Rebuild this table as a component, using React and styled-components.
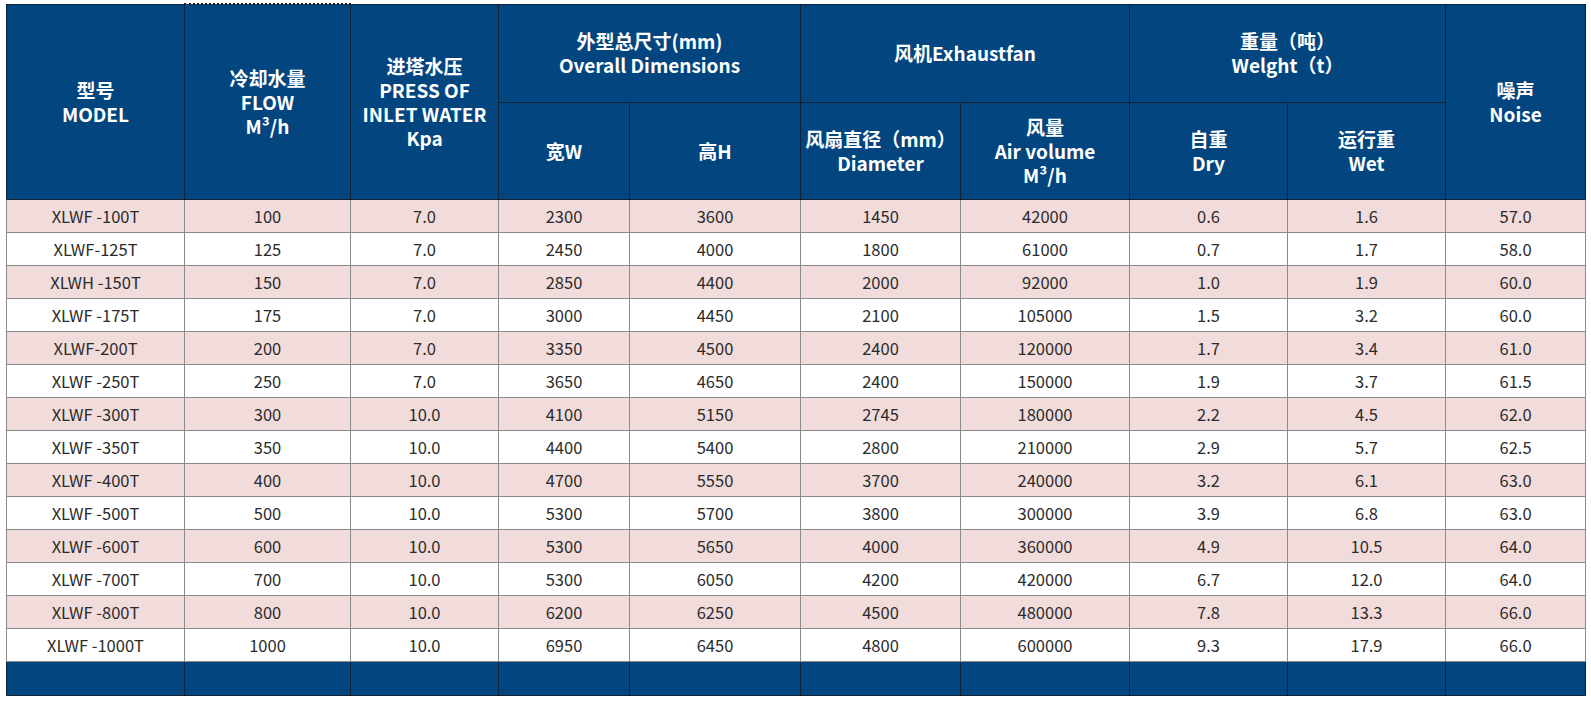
import React from "react";
import styled, { createGlobalStyle } from "styled-components";

const GlobalStyle = createGlobalStyle`
  html, body {
    margin: 0;
    padding: 0;
    background: #ffffff;
  }
  body {
    font-family: "Noto Sans CJK SC", "Noto Sans", sans-serif;
  }
`;

const Page = styled.div`
  padding: 3px 0 0 6px;
  width: 1591px;
  height: 701px;
  box-sizing: border-box;
`;

const Table = styled.table`
  border-collapse: collapse;
  table-layout: fixed;
  width: 1580px;
  border: 1px solid #7a7a7a;
`;

const HeadCell = styled.th`
  background: #03467f;
  color: #ffffff;
  font-family: "Noto Sans CJK SC", "Noto Sans", sans-serif;
  font-weight: 700;
  font-size: 19px;
  line-height: 24px;
  text-align: center;
  vertical-align: middle;
  padding: 0 2px;
  height: ${({ $h }) => $h || 96}px;
  border: 1px solid #0e2238;
  border-top: ${({ $dotted }) =>
    $dotted ? "2px dotted #1b1b1b" : "1px solid #0e2238"};
  white-space: nowrap;
`;

const Line = styled.div`
  display: block;
`;

const Row = styled.tr`
  background: ${({ $alt }) => ($alt ? "#f2dcdb" : "#ffffff")};
`;

const Cell = styled.td`
  height: 32px;
  padding: 0;
  text-align: center;
  vertical-align: middle;
  font-family: "Noto Sans CJK SC", "Noto Sans", sans-serif;
  font-weight: 400;
  font-size: 16.5px;
  color: #2b2b2b;
  border: 1px solid #8a8a8a;
`;

const FootCell = styled.td`
  height: 33px;
  padding: 0;
  background: #03467f;
  border: 1px solid #0e2238;
`;

const columns = [178, 166, 148, 131, 171, 160, 169, 158, 158, 140];

const rows = [
  ["XLWF -100T", "100", "7.0", "2300", "3600", "1450", "42000", "0.6", "1.6", "57.0"],
  ["XLWF-125T", "125", "7.0", "2450", "4000", "1800", "61000", "0.7", "1.7", "58.0"],
  ["XLWH -150T", "150", "7.0", "2850", "4400", "2000", "92000", "1.0", "1.9", "60.0"],
  ["XLWF -175T", "175", "7.0", "3000", "4450", "2100", "105000", "1.5", "3.2", "60.0"],
  ["XLWF-200T", "200", "7.0", "3350", "4500", "2400", "120000", "1.7", "3.4", "61.0"],
  ["XLWF -250T", "250", "7.0", "3650", "4650", "2400", "150000", "1.9", "3.7", "61.5"],
  ["XLWF -300T", "300", "10.0", "4100", "5150", "2745", "180000", "2.2", "4.5", "62.0"],
  ["XLWF -350T", "350", "10.0", "4400", "5400", "2800", "210000", "2.9", "5.7", "62.5"],
  ["XLWF -400T", "400", "10.0", "4700", "5550", "3700", "240000", "3.2", "6.1", "63.0"],
  ["XLWF -500T", "500", "10.0", "5300", "5700", "3800", "300000", "3.9", "6.8", "63.0"],
  ["XLWF -600T", "600", "10.0", "5300", "5650", "4000", "360000", "4.9", "10.5", "64.0"],
  ["XLWF -700T", "700", "10.0", "5300", "6050", "4200", "420000", "6.7", "12.0", "64.0"],
  ["XLWF -800T", "800", "10.0", "6200", "6250", "4500", "480000", "7.8", "13.3", "66.0"],
  ["XLWF -1000T", "1000", "10.0", "6950", "6450", "4800", "600000", "9.3", "17.9", "66.0"],
];

const Lines = ({ items }) =>
  items.map((t) => <Line key={t}>{t}</Line>);

const App = () => {
  return (
    <Page>
      <GlobalStyle />
      <Table>
        <colgroup>
          {columns.map((w, i) => (
            <col key={i} style={{ width: w }} />
          ))}
        </colgroup>
        <thead>
          <tr>
            <HeadCell rowSpan={2}>
              <Lines items={["型号", "MODEL"]} />
            </HeadCell>
            <HeadCell rowSpan={2} $dotted>
              <Lines items={["冷却水量", "FLOW", "M³/h"]} />
            </HeadCell>
            <HeadCell rowSpan={2}>
              <Lines items={["进塔水压", "PRESS OF", "INLET WATER", "Kpa"]} />
            </HeadCell>
            <HeadCell colSpan={2} $h={97}>
              <Lines items={["外型总尺寸(mm)", "Overall Dimensions"]} />
            </HeadCell>
            <HeadCell colSpan={2} $h={97}>
              风机Exhaustfan
            </HeadCell>
            <HeadCell colSpan={2} $h={97}>
              <Lines items={["重量（吨）", "Welght（t）"]} />
            </HeadCell>
            <HeadCell rowSpan={2}>
              <Lines items={["噪声", "Noise"]} />
            </HeadCell>
          </tr>
          <tr>
            <HeadCell>宽W</HeadCell>
            <HeadCell>高H</HeadCell>
            <HeadCell>
              <Lines items={["风扇直径（mm）", "Diameter"]} />
            </HeadCell>
            <HeadCell>
              <Lines items={["风量", "Air volume", "M³/h"]} />
            </HeadCell>
            <HeadCell>
              <Lines items={["自重", "Dry"]} />
            </HeadCell>
            <HeadCell>
              <Lines items={["运行重", "Wet"]} />
            </HeadCell>
          </tr>
        </thead>
        <tbody>
          {rows.map((r, i) => (
            <Row key={r[0]} $alt={i % 2 === 0}>
              {r.map((v, j) => (
                <Cell key={j}>{v}</Cell>
              ))}
            </Row>
          ))}
          <tr>
            {columns.map((w, i) => (
              <FootCell key={i} />
            ))}
          </tr>
        </tbody>
      </Table>
    </Page>
  );
};

export default App;
